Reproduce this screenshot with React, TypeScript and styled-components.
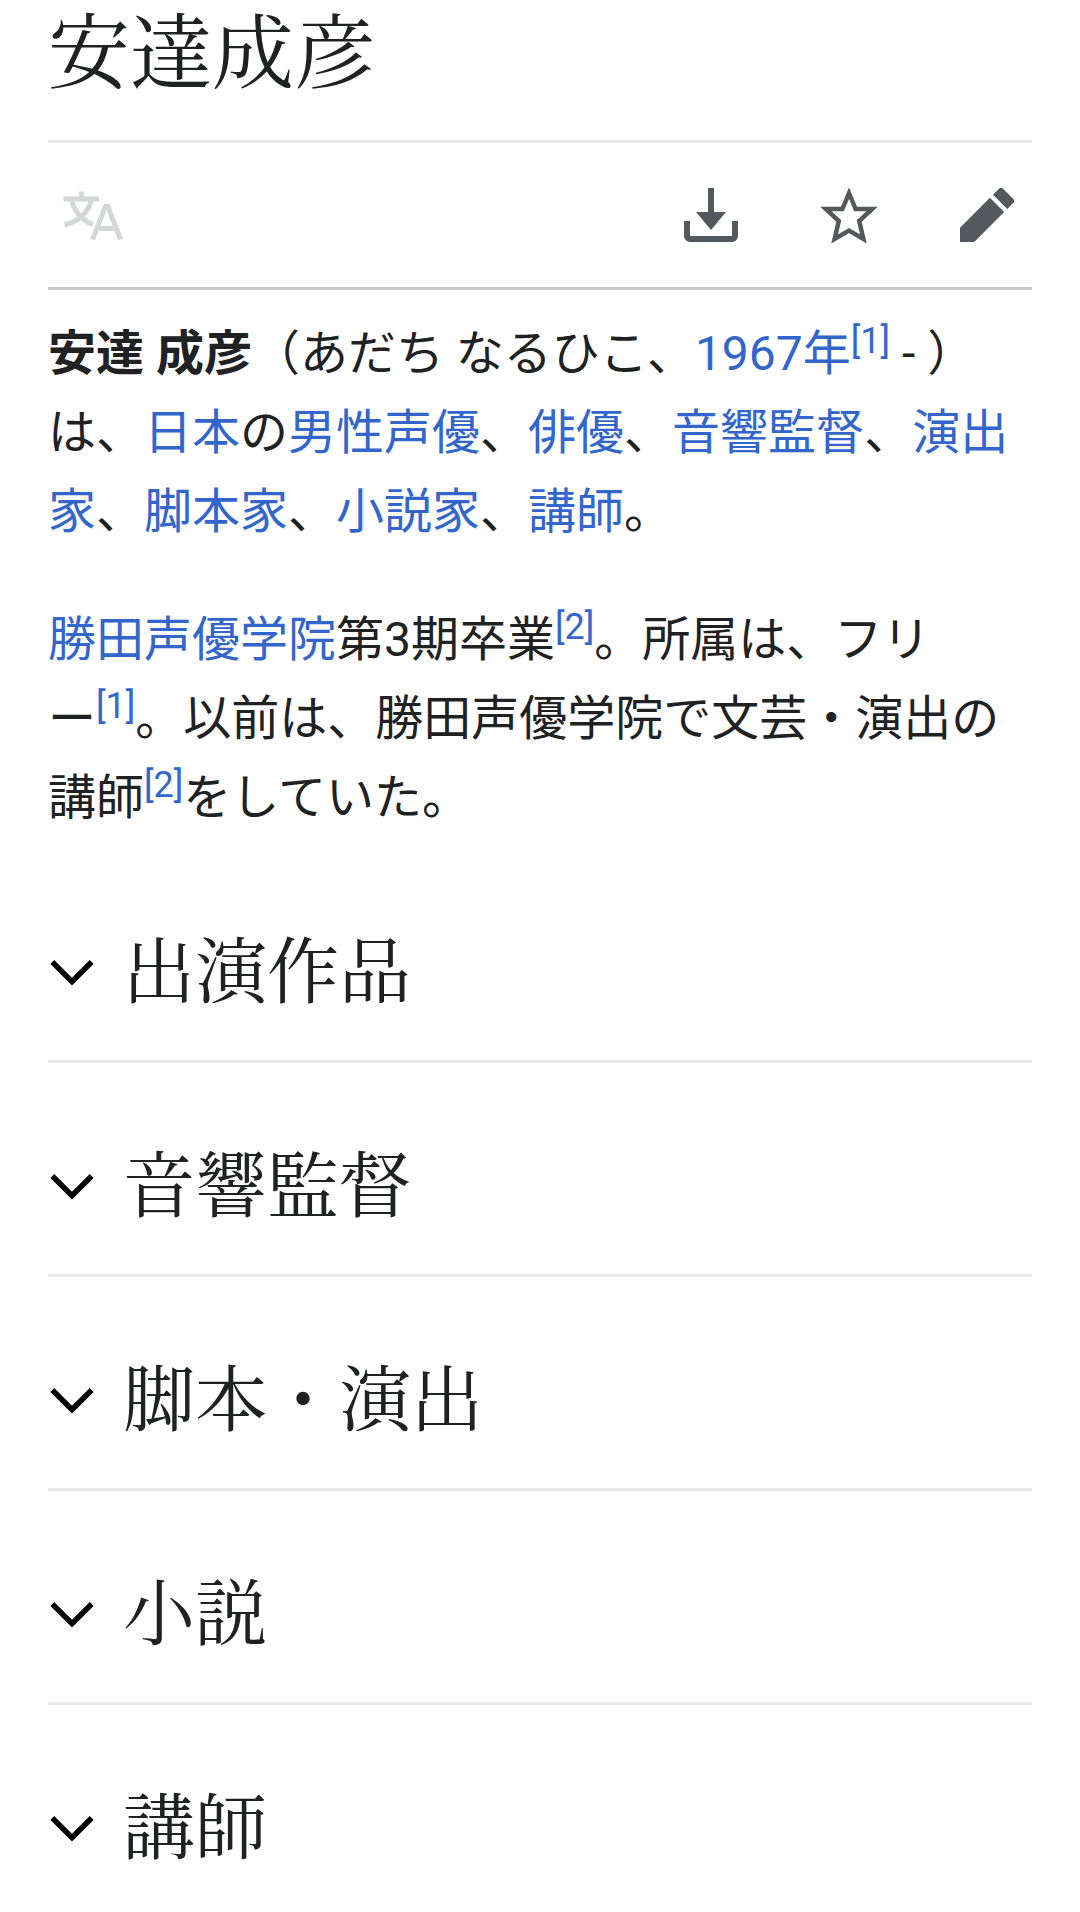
import React from "react";
import styled, { createGlobalStyle } from "styled-components";

const Global = createGlobalStyle`
  * { box-sizing: border-box; }
  body { margin: 0; background: #fff; color: #202122; font-family: Roboto, "Noto Sans CJK JP", sans-serif; }
`;
const Page = styled.main`padding: 0 48px;`;
const Title = styled.h1`
  margin: 0; padding: 6px 0 36px; border-bottom: 3px solid #e9e9ea;
  font: 400 82px/98px "Liberation Serif", "Noto Serif CJK JP", "Noto Sans CJK JP", serif;
`;
const Toolbar = styled.nav`
  display: flex; align-items: center; justify-content: space-between;
  border-bottom: 3px solid #c8c9cb; padding: 42px 15px;
`;
const Actions = styled.div`display: flex; gap: 78px;`;
const IconButton = styled.button`
  border: 0; padding: 0; background: none; color: #54595d; display: flex;
  &:disabled { color: #d5d6d7; }
`;
const Lead = styled.article`
  display: flex; flex-direction: column; gap: 49px; padding: 24px 0 12px;
`;
const Paragraph = styled.p`margin: 0; font-size: 48px; line-height: 79px;`;
const Link = styled.a`color: #36c; text-decoration: none;`;
const Ref = styled.sup`font-size: 36px; line-height: 1; vertical-align: super; white-space: nowrap;`;
const NoBreak = styled.span`white-space: nowrap;`;
const Section = styled.h2`
  margin: 0; padding: 79px 0 42px; border-bottom: 3px solid #e9e9ea;
  font: 400 72px/90px "Liberation Serif", "Noto Serif CJK JP", "Noto Sans CJK JP", serif;
`;
const Toggle = styled.button`
  display: flex; align-items: center; gap: 27px; width: 100%; padding: 0; border: 0; background: none;
  color: inherit; font: inherit; text-align: left;
`;
const sections = ["出演作品", "音響監督", "脚本・演出", "小説", "講師"];
const A = ({ children }: { children: React.ReactNode }) => <Link href="#">{children}</Link>;
const Cite = ({ n }: { n: number }) => <Ref><Link href="#">{`[${n}]`}</Link></Ref>;

export default function App() {
  return (
    <Page lang="ja">
      <Global />
      <Title>安達成彦</Title>
      <Toolbar>
        <IconButton disabled aria-label="言語">
          <svg width="60" height="60" viewBox="0 0 60 60" fill="none" stroke="currentColor" strokeWidth="5">
            <path d="M18.5 6.5V14M.5 14H36M8.500 15C11.5 26 18 35 30 39.5M28.500 15C25 28 16 36 1.500 40" />
            <path d="M29.5 54.500 42.500 21.5H45L57.5 54.500M33 43.500H54" />
          </svg>
        </IconButton>
        <Actions>
          <IconButton aria-label="ダウンロード"><svg width="60" height="60" viewBox="0 0 20 20" fill="currentColor"><path d="M17 12v5H3v-5H1v5a2 2 0 0 0 2 2h14a2 2 0 0 0 2-2v-5z" /><path d="m10 15 5-6h-4V1H9v8H5z" /></svg></IconButton>
          <IconButton aria-label="ウォッチ"><svg width="60" height="60" viewBox="0 0 20 20" fill="none" stroke="currentColor" strokeWidth="1.5"><path d="M10 2.700 12.200 8H17.700L13.400 12 14.800 18 10 15.200 5.200 18 6.600 12 2.300 8H7.800Z" /></svg></IconButton>
          <IconButton aria-label="編集"><svg width="60" height="60" viewBox="0 0 20 20" fill="currentColor"><path d="m16.770 8 1.940-2a1 1 0 0 0 0-1.410l-3.340-3.300a1 1 0 0 0-1.410 0L12 3.230zM1 14.250V19h4.750l9.960-9.960-4.750-4.750z" /></svg></IconButton>
        </Actions>
      </Toolbar>
      <Lead>
        <Paragraph><b>安達 成彦</b>（あだち なるひこ、<A>1967年</A><Cite n={1} /> - ）は、<A>日本</A>の<A>男性声優</A>、<A>俳優</A>、<A>音響監督</A>、<A>演出家</A>、<A>脚本家</A>、<A>小説家</A>、<A>講師</A>。</Paragraph>
        <Paragraph><A>勝田声優学院</A>第3期卒業<Cite n={2} />。所属は、フリ<wbr /><NoBreak>ー<Cite n={1} />。</NoBreak>以前は、勝田声優学院で文芸・演出の講師<Cite n={2} />をしていた。</Paragraph>
      </Lead>
      {sections.map((s) => (
        <Section key={s}>
          <Toggle aria-expanded={false}>
            <svg width="48" height="48" viewBox="0 0 20 20" fill="#000"><path d="m17.400 4.600-7.400 7.400-7.400-7.400L1 6.200l9 9 9-9z" /></svg>
            {s}
          </Toggle>
        </Section>
      ))}
    </Page>
  );
}
